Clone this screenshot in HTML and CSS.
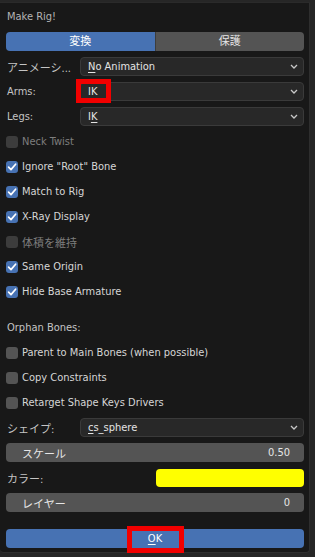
FILE: index.html
```html
<!DOCTYPE html>
<html lang="ja">
<head>
  <meta charset="UTF-8">
  <title>Make Rig!</title>
  <link rel="stylesheet" href="styles.css">
</head>
<body>
  <div class="popup">
    <div class="title">Make Rig!</div>

    <div class="tabs">
      <div class="tab active">変換</div>
      <div class="tab">保護</div>
    </div>

    <div class="row">
      <div class="label">アニメーシ...</div>
      <div class="dropdown"><span><span class="u">N</span>o Animation</span><svg class="chev" viewBox="0 0 8 5"><path d="M1 1 L4 4 L7 1"/></svg></div>
    </div>
    <div class="row marked">
      <div class="label">Arms:</div>
      <div class="dropdown"><span>IK</span><svg class="chev" viewBox="0 0 8 5"><path d="M1 1 L4 4 L7 1"/></svg></div>
      <div class="redbox ik-box"></div>
    </div>
    <div class="row">
      <div class="label">Legs:</div>
      <div class="dropdown"><span>I<span class="u">K</span></span><svg class="chev" viewBox="0 0 8 5"><path d="M1 1 L4 4 L7 1"/></svg></div>
    </div>

    <div class="check disabled"><span class="box"></span>Neck Twist</div>
    <div class="check"><span class="box on"><svg viewBox="0 0 12 12"><path d="M2.6 6.2 L5 8.6 L9.6 3.2"/></svg></span>Ignore "Root" Bone</div>
    <div class="check"><span class="box on"><svg viewBox="0 0 12 12"><path d="M2.6 6.2 L5 8.6 L9.6 3.2"/></svg></span>Match to Rig</div>
    <div class="check"><span class="box on"><svg viewBox="0 0 12 12"><path d="M2.6 6.2 L5 8.6 L9.6 3.2"/></svg></span>X-Ray Display</div>
    <div class="check disabled"><span class="box"></span>体積を維持</div>
    <div class="check"><span class="box on"><svg viewBox="0 0 12 12"><path d="M2.6 6.2 L5 8.6 L9.6 3.2"/></svg></span>Same Origin</div>
    <div class="check"><span class="box on"><svg viewBox="0 0 12 12"><path d="M2.6 6.2 L5 8.6 L9.6 3.2"/></svg></span>Hide Base Armature</div>

    <div class="row section">
      <div class="label wide">Orphan Bones:</div>
    </div>
    <div class="check"><span class="box"></span>Parent to Main Bones (when possible)</div>
    <div class="check"><span class="box"></span>Copy Constraints</div>
    <div class="check"><span class="box"></span>Retarget Shape Keys Drivers</div>

    <div class="row">
      <div class="label">シェイプ:</div>
      <div class="dropdown"><span><span class="u">c</span>s_sphere</span><svg class="chev" viewBox="0 0 8 5"><path d="M1 1 L4 4 L7 1"/></svg></div>
    </div>
    <div class="slider"><span>スケール</span><span>0.50</span></div>
    <div class="row">
      <div class="label half">カラー:</div>
      <div class="swatch"></div>
    </div>
    <div class="slider"><span>レイヤー</span><span>0</span></div>

    <div class="row ok-row">
      <div class="ok"><span><span class="u">O</span>K</span></div>
      <div class="redbox ok-box"></div>
    </div>
  </div>
</body>
</html>
```

FILE: styles.css
```css
html, body {
  margin: 0; padding: 0;
  width: 315px; height: 557px;
  background: #262626;
  overflow: hidden;
  font-family: "DejaVu Sans Condensed", "DejaVu Sans", "Noto Sans CJK JP", sans-serif;
  font-size: 11px;
  color: #d2d2d2;
}

/* popup menu panel */
.popup {
  margin-top: 2px;
  width: 298px;
  height: 545px;
  padding: 4px 5px 0 6px;
  background: #181818;
  border-top: 1px solid #2a2a2a;
  border-right: 1px solid #2e2e2e;
  border-bottom: 1px solid #2e2e2e;
  border-radius: 0 0 4px 4px;
  display: flex;
  flex-direction: column;
  gap: 6px;
}

.title {
  height: 19px; line-height: 19px;
  padding-left: 1px;
  color: #b4b4b4;
}

/* tabs */
.tabs {
  display: flex;
  height: 19px;
}
.tab {
  flex: 1;
  background: #545454;
  color: #e6e6e6;
  text-align: center;
  line-height: 19px;
  border-radius: 0 4px 4px 0;
  border-left: 1px solid #3d3d3d;
}
.tab.active {
  background: #4772b3;
  color: #fff;
  border-radius: 4px 0 0 4px;
  border-left: none;
}

/* label + widget rows */
.row {
  display: flex;
  height: 19px;
  align-items: center;
  position: relative;
}
.label {
  width: 73px;
  padding-left: 1px;
  color: #c4c4c4;
  white-space: nowrap;
  overflow: hidden;
}
.label.half { width: 149px; }
.label.wide { width: auto; }
.row.section { margin-top: 11px; }

.dropdown {
  flex: 1;
  height: 17px;
  background: #282828;
  border: 1px solid #3a3a3a;
  border-radius: 4px;
  display: flex;
  align-items: center;
  justify-content: space-between;
  padding: 0 5px 0 7px;
  color: #e4e4e4;
}
.chev {
  width: 8px; height: 5px;
  fill: none; stroke: #c8c8c8; stroke-width: 1.3;
}
.u { text-decoration: underline; text-underline-offset: 2px; }

/* checkboxes */
.check {
  display: flex;
  align-items: center;
  height: 19px;
  gap: 4px;
  color: #d6d6d6;
}
.box {
  width: 12px; height: 12px;
  border-radius: 3px;
  background: #545454;
  display: flex;
}
.box svg {
  width: 12px; height: 12px;
  fill: none; stroke: #fff; stroke-width: 1.7;
  stroke-linecap: round; stroke-linejoin: round;
}
.box.on { background: #4772b3; }
.check.disabled { color: #7e7e7e; }
.check.disabled .box { background: #3c3c3c; }

/* number sliders */
.slider {
  height: 19px;
  background: #545454;
  border-radius: 4px;
  display: flex;
  align-items: center;
  justify-content: space-between;
  padding: 0 14px 0 16px;
  color: #e6e6e6;
}

.swatch {
  flex: 1;
  height: 18px;
  background: #ffff00;
  border-radius: 4px;
}

/* confirm button */
.ok-row { margin-top: 11px; }
.ok {
  flex: 1;
  height: 19px;
  background: #4772b3;
  border-radius: 4px;
  text-align: center;
  line-height: 19px;
  color: #fff;
}

/* red annotation frames drawn over the screenshot */
.redbox {
  position: absolute;
  border: 5px solid #f20000;
  box-sizing: border-box;
}
.ik-box {
  left: 70px; top: -3px;
  width: 35px; height: 24px;
}
.ok-box {
  left: 121px; top: -3px;
  width: 57px; height: 27px;
}
```
